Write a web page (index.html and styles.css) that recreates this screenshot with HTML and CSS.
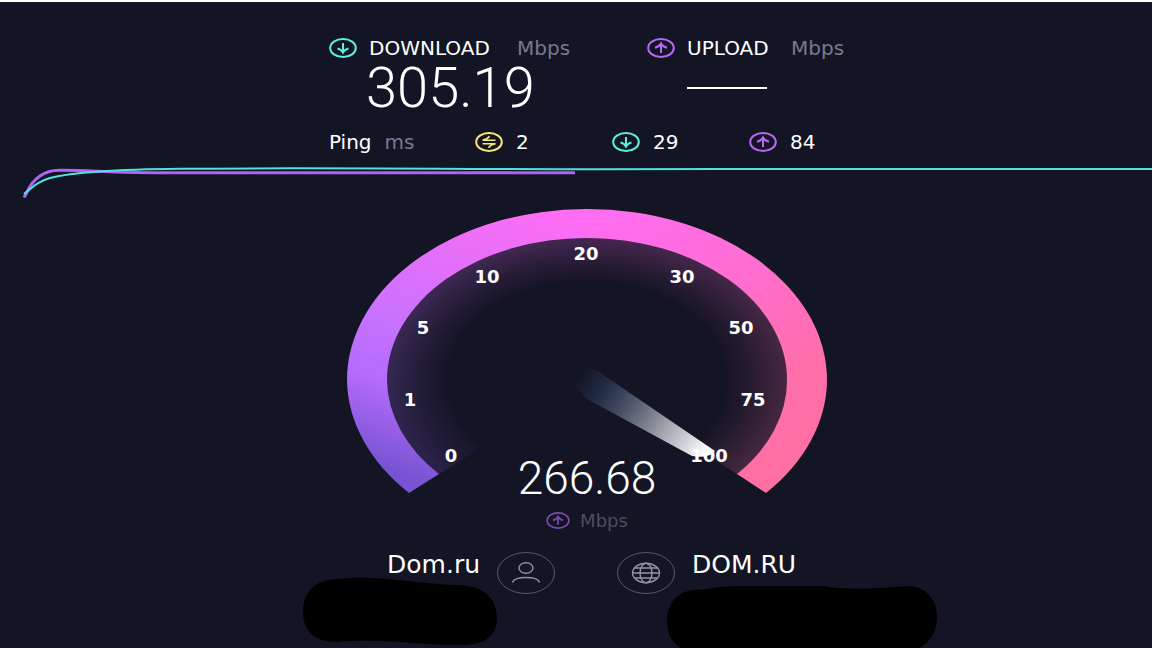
FILE: index.html
```html
<!DOCTYPE html>
<html lang="ru">
<head>
    <meta charset="UTF-8">
    <meta name="viewport" content="width=device-width, initial-scale=1.0">
    <title>Speedtest</title>
    <link rel="stylesheet" href="styles.css">
</head>
<body>
    <svg class="defs" width="0" height="0" aria-hidden="true">
        <symbol id="icon-down" viewBox="0 0 28 20">
            <ellipse cx="14" cy="10" rx="12.8" ry="9"/>
            <path d="M14 5v9.5M8.5 10.5c2.5.6 4.5 2 5.5 4 1-2 3-3.4 5.5-4"/>
        </symbol>
        <symbol id="icon-up" viewBox="0 0 28 20">
            <ellipse cx="14" cy="10" rx="12.8" ry="9"/>
            <path d="M14 15V5.5M8 9.8c2.5-.6 5-2.3 6-4.300 1 2 3.500 3.700 6 4.300"/>
        </symbol>
        <symbol id="icon-ping" viewBox="0 0 28 20">
            <ellipse cx="14" cy="10" rx="12.8" ry="9"/>
            <path stroke-width="1.6" d="M20.5 8.200h-13c3-.6 5.500-1.900 7-4M7.500 11.800h13c-3 .6-5.500 1.900-7 4"/>
        </symbol>
    </svg>

    <main>
        <div class="container">
            <section class="results">
                <div class="result download">
                    <h2><svg class="icon teal"><use href="#icon-down"/></svg><span class="name">DOWNLOAD</span> <span class="unit">Mbps</span></h2>
                    <div class="value">305.19</div>
                </div>
                <div class="result upload">
                    <h2><svg class="icon purple"><use href="#icon-up"/></svg><span class="name">UPLOAD</span> <span class="unit">Mbps</span></h2>
                    <div class="value"><span class="dash"></span></div>
                </div>
            </section>

            <section class="pings">
                <div class="ping-title"><span>Ping</span> <span class="unit">ms</span></div>
                <div class="ping"><svg class="icon yellow"><use href="#icon-ping"/></svg>2</div>
                <div class="ping"><svg class="icon teal"><use href="#icon-down"/></svg>29</div>
                <div class="ping"><svg class="icon purple"><use href="#icon-up"/></svg>84</div>
            </section>
        </div>

        <svg class="chart" viewBox="0 0 1152 36" preserveAspectRatio="none" aria-hidden="true">
            <path class="line-up" d="M24 33.5C29 25 31 18 40 12Q48 6 60 6.200C90 6 110 8.800 170 8.800H575"/>
            <path class="line-down" d="M24 30C32 24 36 18 50 14C70 9 110 5.500 180 4.800C300 3.500 430 5 600 5.200S900 4 1152 5"/>
        </svg>

        <div class="container">
            <section class="gauge">
                <svg viewBox="0 0 480 285" aria-hidden="true">
                    <defs>
                        <linearGradient id="ring-left" gradientUnits="userSpaceOnUse" x1="125" y1="290" x2="230" y2="10">
                            <stop offset="0" stop-color="#7854d2"/>
                            <stop offset=".26" stop-color="#b46bfb"/>
                            <stop offset=".45" stop-color="#c772ff"/>
                            <stop offset="1" stop-color="#ff6df3"/>
                        </linearGradient>
                        <linearGradient id="ring-right" gradientUnits="userSpaceOnUse" x1="240" y1="15" x2="417" y2="284">
                            <stop offset="0" stop-color="#ff6df3"/>
                            <stop offset=".4" stop-color="#ff6dd0"/>
                            <stop offset=".75" stop-color="#ff6fa9"/>
                            <stop offset="1" stop-color="#ff6fa2"/>
                        </linearGradient>
                        <radialGradient id="glow" gradientUnits="userSpaceOnUse" cx="0" cy="0" r="1" gradientTransform="translate(240 171) scale(200 142)">
                            <stop offset=".68" stop-color="#fff" stop-opacity="0"/>
                            <stop offset=".84" stop-color="#fff" stop-opacity=".1"/>
                            <stop offset="1" stop-color="#fff" stop-opacity=".22"/>
                        </radialGradient>
                        <mask id="glow-mask" maskUnits="userSpaceOnUse" x="0" y="0" width="480" height="285">
                            <rect width="480" height="285" fill="url(#glow)"/>
                        </mask>
                        <linearGradient id="needle" gradientUnits="userSpaceOnUse" x1="232" y1="165" x2="358" y2="246">
                            <stop offset="0" stop-color="#263455" stop-opacity="0"/>
                            <stop offset=".2" stop-color="#2a3856" stop-opacity=".7"/>
                            <stop offset=".65" stop-color="#989ba5"/>
                            <stop offset="1" stop-color="#fff"/>
                        </linearGradient>
                    </defs>
                    <g mask="url(#glow-mask)">
                        <path fill="url(#ring-left)" d="M240 171L92 265A200 142 0 0 1 40 171A200 142 0 0 1 240 29z"/>
                        <path fill="url(#ring-right)" d="M240 171V29A200 142 0 0 1 440 171A200 142 0 0 1 390 265z"/>
                    </g>
                    <path fill="url(#ring-left)" d="M62 284A240 171 0 0 1 0 171A240 171 0 0 1 241 0V29A200 142 0 0 0 40 171A200 142 0 0 0 92 265z"/>
                    <path fill="url(#ring-right)" d="M240 0A240 171 0 0 1 480 171A240 171 0 0 1 419 284L390 265A200 142 0 0 0 440 171A200 142 0 0 0 240 29z"/>
                    <path fill="url(#needle)" d="M236 157L252 163L368 242Q362 250 345 247L240 190L224 172z"/>
                    <g class="ticks">
                        <text x="104" y="253">0</text>
                        <text x="63" y="197">1</text>
                        <text x="76" y="125">5</text>
                        <text x="140" y="74">10</text>
                        <text x="239" y="51">20</text>
                        <text x="335" y="74">30</text>
                        <text x="394" y="125">50</text>
                        <text x="406" y="197">75</text>
                        <text x="362" y="253">100</text>
                    </g>
                </svg>
                <div class="reading">266.68</div>
                <div class="reading-unit"><svg class="icon purple"><use href="#icon-up"/></svg>Mbps</div>
            </section>

            <section class="providers">
                <div class="provider client">
                    <span class="provider-name">Dom.ru</span>
                    <svg class="badge" viewBox="0 0 60 44">
                        <ellipse cx="30" cy="22" rx="28.5" ry="20.5"/>
                        <g class="glyph">
                            <ellipse cx="30" cy="17" rx="7" ry="5.3"/>
                            <path d="M16.500 31.5c1-3.500 5-5 13.500-5s12.500 1.500 13.500 5"/>
                        </g>
                    </svg>
                    <svg class="scribble" viewBox="0 0 194 68" aria-hidden="true">
                        <path d="M0 35C0 14 13 3 34 2C75-2 100 5 150 8C180 7 194 21 194 41C194 60 180 68 160 68C110 69 90 61 33 65C12 65 0 54 0 35z"/>
                    </svg>
                </div>
                <div class="provider server">
                    <svg class="badge" viewBox="0 0 60 44">
                        <ellipse cx="30" cy="22" rx="28.5" ry="20.5"/>
                        <g class="glyph">
                            <ellipse cx="30" cy="22" rx="13.5" ry="9.7"/>
                            <ellipse cx="30" cy="22" rx="6" ry="9.7"/>
                            <path d="M16.5 22h27M19 17h22M19 27h22"/>
                        </g>
                    </svg>
                    <span class="provider-name">DOM.RU</span>
                    <svg class="scribble" viewBox="0 0 270 64" aria-hidden="true">
                        <path d="M0 34C1 17 10 5 28 4C45 3 50 0 70 0H155C180 4 205 3 240 0C258 0 270 13 270 30C270 46 263 57 249 64H17C5 57 0 49 0 34z"/>
                    </svg>
                </div>
            </section>
        </div>
    </main>
</body>
</html>
```
FILE: styles.css
```css
* {
    box-sizing: border-box;
}
body {
    margin: 0;
    min-height: 100vh;
    padding-top: 32px;
    border-top: 2px solid #fff;
    background-color: #131424;
    color: #fff;
    font-family: "DejaVu Sans", sans-serif;
    font-size: 20px;
    overflow: hidden;
}
.defs {
    position: absolute;
}
.container {
    max-width: 538px;
    margin: 0 auto;
    padding-left: 22px;
}
.icon {
    width: 28px;
    height: 20px;
    fill: none;
    stroke: currentColor;
    stroke-width: 2;
    flex-shrink: 0;
}
.teal {
    color: #5ff0dc;
}
.purple {
    color: #b768f5;
}
.yellow {
    color: #f5e878;
}
.unit {
    color: #77798f;
}

/* download / upload */
.results {
    display: grid;
    grid-template-columns: 318px 1fr;
}
.result h2 {
    display: flex;
    align-items: center;
    gap: 8px;
    height: 28px;
    margin: 0;
    font-size: 20px;
    font-weight: normal;
    line-height: 24px;
}
.result .icon {
    margin-right: 4px;
}
.download .name {
    min-width: 140px;
}
.upload .name {
    min-width: 96px;
}
.value {
    display: flex;
    align-items: center;
    height: 52px;
    padding-left: 37px;
    font-family: Roboto, sans-serif;
    font-size: 56px;
    font-weight: 300;
    line-height: 52px;
}
.dash {
    width: 80px;
    height: 2px;
    margin-left: 3px;
    background-color: #fff;
}

.pings {
    display: grid;
    grid-template-columns: 146px 137px 137px 1fr;
    align-items: center;
    height: 24px;
    margin-top: 16px;
}
.ping-title,
.ping {
    display: flex;
    align-items: center;
    gap: 13px;
}

/* speed graph */
.chart {
    display: block;
    width: 100%;
    height: 36px;
    margin-top: 10px;
    fill: none;
}
.line-up {
    stroke: #b462f5;
    stroke-width: 3;
}
.line-down {
    stroke: #4fe3df;
    stroke-width: 2;
}

.gauge {
    margin-top: 9px;
    text-align: center;
}
.gauge > svg {
    display: block;
    width: 480px;
    max-width: 100%;
    margin: 0 auto;
}
.ticks {
    fill: #fff;
    font-size: 18px;
    font-weight: bold;
    text-anchor: middle;
}
.reading {
    height: 48px;
    margin-top: -40px;
    font-family: Roboto, sans-serif;
    font-size: 46px;
    font-weight: 300;
    line-height: 48px;
}
.reading-unit {
    display: flex;
    align-items: center;
    justify-content: center;
    gap: 10px;
    height: 20px;
    margin-top: 8px;
    color: #4d4e5e;
    font-size: 18px;
}
.reading-unit .icon {
    width: 24px;
    height: 17px;
    opacity: .65;
}

.providers {
    display: grid;
    grid-template-columns: 227px 1fr;
    column-gap: 60px;
    margin-top: 21px;
}
.provider {
    position: relative;
    display: flex;
    gap: 16px;
    height: 44px;
}
.client {
    justify-content: flex-end;
}
.provider-name {
    font-size: 25px;
    line-height: 28px;
}
.badge {
    width: 60px;
    height: 44px;
    fill: none;
    stroke: #55576a;
}
.glyph {
    stroke: #9294a5;
    stroke-width: 1.4;
}
.scribble {
    position: absolute;
}
.client .scribble {
    top: 26px;
    right: 59px;
    width: 194px;
}
.server .scribble {
    top: 35px;
    left: 51px;
    width: 270px;
}
```
